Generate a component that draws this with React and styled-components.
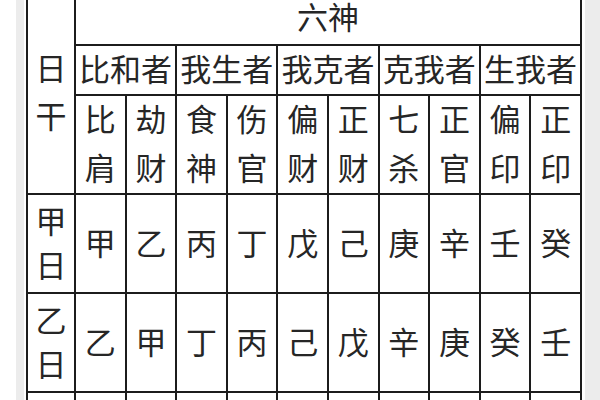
import React from "react";
import styled, { createGlobalStyle } from "styled-components";

const Global = createGlobalStyle`
  html, body { margin: 0; padding: 0; background: #ffffff; overflow: hidden; }
  body { width: 600px; height: 400px; }
`;

const Page = styled.div`
  display: flex;
  width: 600px;
  height: 400px;
  padding-left: 16px;
  box-sizing: border-box;
  overflow: hidden;
`;

const Frame = styled.div`
  flex: 1;
  display: flex;
  background: #ececec;
  padding-left: 8px;
`;

const Paper = styled.div`
  background: #ffffff;
  padding: 0 3px 0 2px;
  height: 100%;
`;

const Table = styled.table`
  border-collapse: collapse;
  table-layout: fixed;
  width: 556px;
  margin-top: -10px;
  font-family: "Noto Sans CJK SC", "Noto Sans", sans-serif;
  font-size: 31px;
  color: #262626;
`;

const Cell = styled.td`
  border: 2px solid #1c1c1c;
  padding: 0;
  text-align: center;
  vertical-align: middle;
  height: ${(p) => p.$h}px;
  line-height: 1;
  white-space: nowrap;
`;

const Stack = styled.span`
  display: flex;
  flex-direction: column;
  align-items: center;
  justify-content: center;
  gap: ${(p) => p.$gap}px;
  margin-bottom: 5px;
`;

const Glyph = styled.span`
  display: inline-block;
  margin-bottom: 5px;
`;

const Col = styled.col`
  width: ${(p) => p.$w}px;
`;

const groups = ["比和者", "我生者", "我克者", "克我者", "生我者"];
const gods = [
  ["比", "肩"], ["劫", "财"], ["食", "神"], ["伤", "官"], ["偏", "财"],
  ["正", "财"], ["七", "杀"], ["正", "官"], ["偏", "印"], ["正", "印"],
];
const rows = [
  { day: ["甲", "日"], stems: ["甲", "乙", "丙", "丁", "戊", "己", "庚", "辛", "壬", "癸"] },
  { day: ["乙", "日"], stems: ["乙", "甲", "丁", "丙", "己", "戊", "辛", "庚", "癸", "壬"] },
  { day: ["丙", "日"], stems: ["丙", "丁", "戊", "己", "庚", "辛", "壬", "癸", "甲", "乙"] },
];

export default function App() {
  return (
    <>
      <Global />
      <Page>
        <Frame>
          <Paper>
            <Table>
              <colgroup>
                <Col $w={48} />
                {gods.map((_, i) => (
                  <Col key={i} $w={50.6} />
                ))}
              </colgroup>
              <tbody>
                <tr>
                  <Cell rowSpan={3}>
                    <Stack $gap={17}>
                      <span>日</span>
                      <span>干</span>
                    </Stack>
                  </Cell>
                  <Cell colSpan={10} $h={52}>
                    <Glyph>六神</Glyph>
                  </Cell>
                </tr>
                <tr>
                  {groups.map((g) => (
                    <Cell key={g} colSpan={2} $h={48}>
                      <Glyph>{g}</Glyph>
                    </Cell>
                  ))}
                </tr>
                <tr>
                  {gods.map((g, i) => (
                    <Cell key={i} $h={97}>
                      <Stack $gap={18}>
                        <span>{g[0]}</span>
                        <span>{g[1]}</span>
                      </Stack>
                    </Cell>
                  ))}
                </tr>
                {rows.map((r) => (
                  <tr key={r.day[0]}>
                    <Cell $h={97}>
                      <Stack $gap={13}>
                        <span>{r.day[0]}</span>
                        <span>{r.day[1]}</span>
                      </Stack>
                    </Cell>
                    {r.stems.map((s, i) => (
                      <Cell key={i}>
                        <Glyph>{s}</Glyph>
                      </Cell>
                    ))}
                  </tr>
                ))}
              </tbody>
            </Table>
          </Paper>
        </Frame>
      </Page>
    </>
  );
}
